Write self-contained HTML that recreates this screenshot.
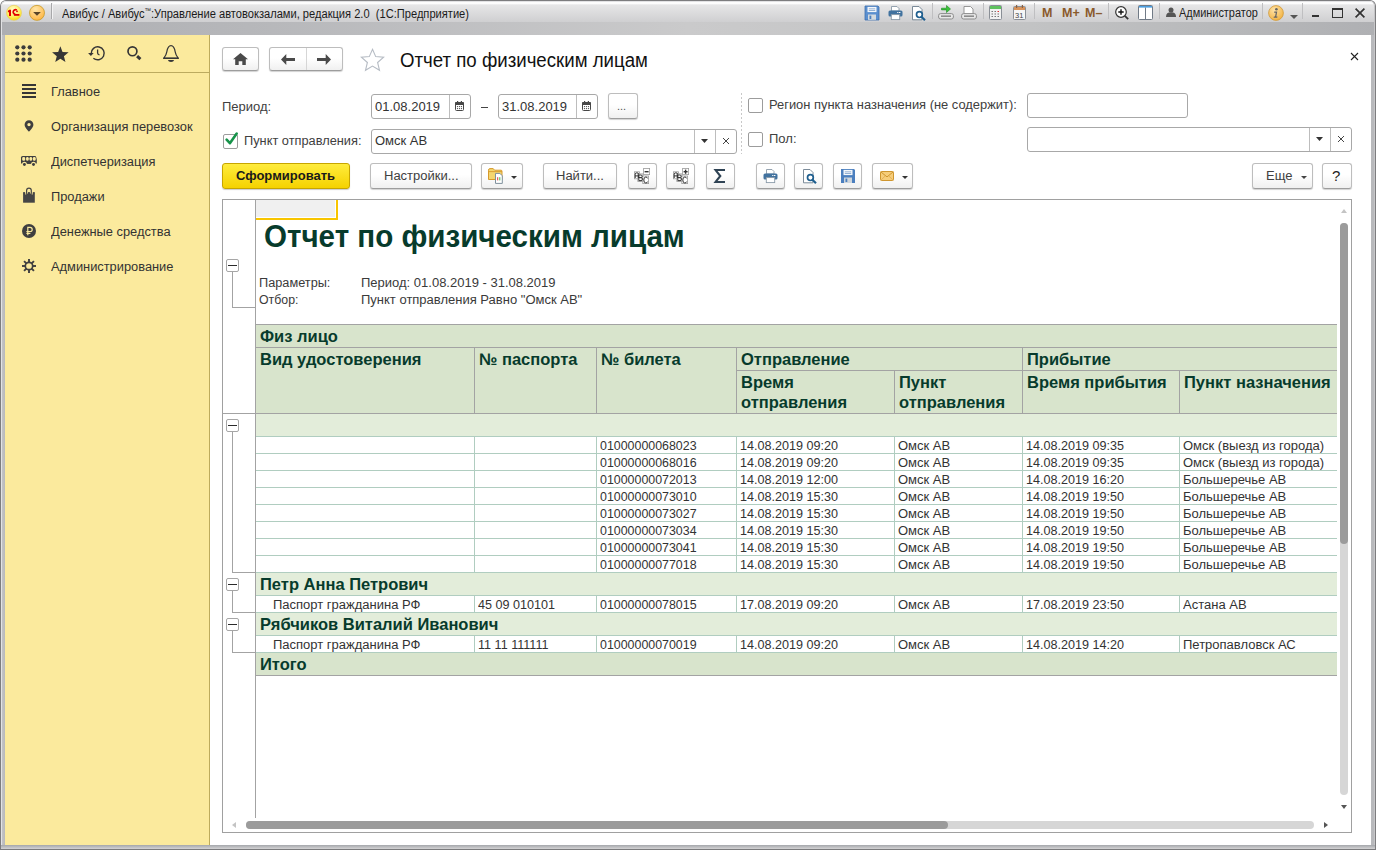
<!DOCTYPE html>
<html><head><meta charset="utf-8">
<style>
*{box-sizing:border-box;margin:0;padding:0}
html,body{width:1376px;height:850px;overflow:hidden;background:#ffffff;font-family:"Liberation Sans",sans-serif;}
.a{position:absolute}
svg{position:absolute;overflow:visible}
#win{position:absolute;left:0;top:0;width:1376px;height:850px;background:linear-gradient(90deg,#cacacc,#b8b9bc 5px);border-radius:6px 6px 0 0;overflow:hidden}
#tb{position:absolute;left:1px;top:1px;width:1374px;height:21px;background:linear-gradient(#fdfdfd 0,#fdfdfd 2.5px,#e6e6e7 4px,#cfcfd1);border-radius:5px 5px 0 0}
#band{position:absolute;left:2px;top:22px;width:1372px;height:13px;background:linear-gradient(90deg,#adaeb2 0,#b6b7ba 18%,#cacacb 50%,#c2c3c4 75%,#afb0b3 100%);}
#side{position:absolute;left:5px;top:35px;width:205px;height:810px;background:#fbea9d;border-right:1px solid #bdab5c;}
#main{position:absolute;left:210px;top:35px;width:1161px;height:810px;background:#fff;}
.t13{font-size:13px;color:#4d4d4d;white-space:nowrap;position:absolute}
.btn{position:absolute;border:1px solid #bdbdbd;border-bottom-color:#9d9d9d;border-radius:3px;background:linear-gradient(#ffffff 45%,#f0f0f0);box-shadow:0 1px 1px rgba(0,0,0,.18);}
.inp{position:absolute;border:1px solid #a8a8a8;border-radius:3px;background:#fff;}
.chk{position:absolute;width:15px;height:15px;border:1px solid #9c9c9c;border-radius:2px;background:#fff}
.menu{position:absolute;left:46px;font-size:13px;color:#333;white-space:nowrap}
.u{position:absolute;font-size:13.7px;line-height:14px;white-space:nowrap;transform-origin:0 0;transform:scaleX(0.95)}
</style></head><body>
<div id="win">
 <div id="tb"></div>
 <div id="band"></div>
  <!-- title bar -->
 <div class="a" style="left:0;top:0;width:1376px;height:850px;border:1px solid #7d7d7f;border-bottom:none;border-radius:6px 6px 0 0"></div>
 <div class="a" style="left:1px;top:1px;width:1374px;height:849px;border:1px solid #e2e2e4;border-bottom:none;border-right-color:#c6c6c8;border-radius:5px 5px 0 0"></div>
 <svg class="a" style="left:6px;top:5px" width="17" height="17" viewBox="0 0 17 17">
  <defs><radialGradient id="g1c" cx="45%" cy="30%" r="75%"><stop offset="0" stop-color="#fffbd0"/><stop offset=".6" stop-color="#ffef60"/><stop offset="1" stop-color="#f7d600"/></radialGradient>
  <radialGradient id="gdd" cx="40%" cy="25%" r="80%"><stop offset="0" stop-color="#ffe6a8"/><stop offset="1" stop-color="#ffb440"/></radialGradient></defs>
  <circle cx="8" cy="7.8" r="7.5" fill="url(#g1c)" stroke="#e8cf60" stroke-width="0.7"/>
  <path d="M3 4.8h2v6.1H3V6.9L1.9 7.4V6z" fill="#e00000"/>
  <path d="M10.8 5.1a2.3 2.3 0 1 0 -1.4 4.2" stroke="#e00000" stroke-width="1.7" fill="none"/>
  <rect x="7.9" y="9" width="5.5" height="1.8" fill="#e00000"/>
  <rect x="10.2" y="5.6" width="1.6" height="1.5" fill="#e00000"/>
 </svg>
 <svg class="a" style="left:29px;top:5px" width="17" height="17" viewBox="0 0 17 17">
  <circle cx="8" cy="7.85" r="7.5" fill="url(#gdd)" stroke="#c79a2a" stroke-width="0.8"/>
  <path d="M4.1 7h7.8l-3.9 3.7z" fill="#5a4528"/>
 </svg>
 <div class="a" style="left:51px;top:3px;width:1px;height:16px;background:#a8a8aa"></div>
 <div class="a" style="left:52px;top:3px;width:1px;height:16px;background:#f2f2f3"></div>
 <div class="a" style="left:62px;top:5px;font-size:12px;line-height:12px;color:#1b1b1b;white-space:nowrap;transform-origin:0 0;transform:scaleX(0.926)">Авибус / Авибус<sup style="font-size:7px;vertical-align:5px">™</sup>:Управление автовокзалами, редакция 2.0&nbsp; (1С:Предприятие)</div>

 <!-- title bar right icons -->
 <svg style="left:865px;top:6px" width="14" height="14" viewBox="0 0 14 14">
  <path d="M0 0h13l1 1v13H0z" fill="#5b8fcf" stroke="#3d6fae" stroke-width=".8"/>
  <rect x="2.5" y="0.9" width="9" height="5.2" fill="#f4f7fb"/>
  <rect x="3.8" y="2.4" width="6.4" height="0.9" fill="#8aa9cf"/><rect x="3.8" y="4" width="6.4" height="0.9" fill="#8aa9cf"/>
  <rect x="3" y="8.5" width="8" height="5.3" fill="#d4dadf"/><rect x="4.5" y="9.6" width="1.8" height="3.4" fill="#4b7fbf"/>
 </svg>
 <svg style="left:888px;top:6px" width="15" height="14" viewBox="0 0 15 14">
  <path d="M3.5 0.5h5.5l2 2V5h-7.5z" fill="#fff" stroke="#8a9aa8" stroke-width=".9"/>
  <rect x="0.5" y="4.6" width="14" height="6" rx="1.5" fill="#41729f"/>
  <rect x="11" y="6" width="1.4" height="1" fill="#fff"/><rect x="9.2" y="6" width="1.2" height="1" fill="#fff"/>
  <rect x="3.3" y="8.6" width="8.4" height="5" fill="#fff" stroke="#8a9aa8" stroke-width=".9"/>
 </svg>
 <svg style="left:912px;top:6px" width="14" height="15" viewBox="0 0 14 15">
  <path d="M0.5 0.5h6.5l3 3v10.3H0.5z" fill="#fff" stroke="#6d7f8e" stroke-width=".9"/>
  <circle cx="7.4" cy="8.6" r="2.9" fill="#fff" stroke="#1f5f8f" stroke-width="1.7"/>
  <path d="M9.4 10.7l3.6 3.6" stroke="#1f5f8f" stroke-width="2.2"/>
 </svg>
 <div class="a" style="left:932px;top:3px;width:1px;height:16px;background:#bfbfc1"></div>
 <svg style="left:938px;top:5px" width="16" height="15" viewBox="0 0 16 15">
  <rect x="0.6" y="8.6" width="14.8" height="5.4" rx="2" fill="#e8e8e8" stroke="#8c8c8c" stroke-width="1"/>
  <rect x="3" y="10.4" width="10" height="1.6" fill="#8c8c8c"/>
  <path d="M3.5 3.2h5V0.5l4 3.5-4 3.5V4.9h-5z" fill="#39c43a" stroke="#1e8a22" stroke-width=".6"/>
 </svg>
 <svg style="left:961px;top:6px" width="16" height="14" viewBox="0 0 16 14">
  <path d="M3 0.5h6.5l2.5 2.5v5.5H3z" fill="#fff" stroke="#8c8c8c" stroke-width=".9"/>
  <rect x="0.6" y="7.6" width="14.8" height="5.4" rx="2" fill="#e8e8e8" stroke="#8c8c8c" stroke-width="1"/>
  <rect x="3" y="9.4" width="10" height="1.6" fill="#8c8c8c"/>
 </svg>
 <div class="a" style="left:983px;top:3px;width:1px;height:16px;background:#bfbfc1"></div>
 <svg style="left:989px;top:5px" width="13" height="15" viewBox="0 0 13 15">
  <rect x="0.5" y="0.5" width="12" height="14" rx="1" fill="#f2f2f2" stroke="#8a8f96" stroke-width="1"/>
  <rect x="1" y="1" width="11" height="3" fill="#5fc25f"/>
  <g fill="#777"><rect x="2.5" y="6" width="1.5" height="1"/><rect x="5.5" y="6" width="1.5" height="1"/><rect x="2.5" y="8.5" width="1.5" height="1"/><rect x="5.5" y="8.5" width="1.5" height="1"/><rect x="8.5" y="8.5" width="1.5" height="1"/><rect x="2.5" y="11" width="1.5" height="1"/><rect x="5.5" y="11" width="1.5" height="1"/><rect x="8.5" y="11" width="1.5" height="1"/></g>
  <rect x="8.5" y="6" width="1.5" height="1" fill="#e03030"/>
 </svg>
 <svg style="left:1013px;top:5px" width="13" height="15" viewBox="0 0 13 15">
  <rect x="0.5" y="1.5" width="12" height="13" rx="1" fill="#f6f6f6" stroke="#8a8f96" stroke-width="1"/>
  <rect x="1" y="2" width="11" height="3" fill="#d9935a"/>
  <rect x="3" y="0" width="1.2" height="3" fill="#8a6040"/><rect x="8.8" y="0" width="1.2" height="3" fill="#8a6040"/>
  <text x="2" y="12.8" font-family="Liberation Sans" font-size="7.5" fill="#444">31</text>
 </svg>
 <div class="a" style="left:1034px;top:3px;width:1px;height:16px;background:#bfbfc1"></div>
 <div class="a" style="left:1042px;top:7px;font-size:12.5px;line-height:12px;font-weight:bold;color:#8a5a2c;white-space:nowrap">M</div>
 <div class="a" style="left:1062px;top:7px;font-size:12.5px;line-height:12px;font-weight:bold;color:#8a5a2c;white-space:nowrap">M+</div>
 <div class="a" style="left:1085px;top:7px;font-size:12.5px;line-height:12px;font-weight:bold;color:#8a5a2c;white-space:nowrap">M–</div>
 <div class="a" style="left:1108px;top:3px;width:1px;height:16px;background:#bfbfc1"></div>
 <svg style="left:1115px;top:6px" width="14" height="14" viewBox="0 0 14 14">
  <circle cx="6" cy="6" r="5.3" fill="#fff" stroke="#333" stroke-width="1.2"/>
  <path d="M3.3 6h5.4M6 3.3v5.4" stroke="#111" stroke-width="1.4"/>
  <path d="M9.8 9.8l3.4 3.4" stroke="#333" stroke-width="1.8"/>
 </svg>
 <svg style="left:1138px;top:5px" width="15" height="15" viewBox="0 0 15 15">
  <rect x="0.5" y="0.5" width="14" height="14" rx="1" fill="#fff" stroke="#707a86" stroke-width="1"/>
  <rect x="1" y="1" width="13" height="1.6" fill="#4a9ee0"/>
  <rect x="7" y="2.5" width="1" height="12" fill="#707a86"/>
 </svg>
 <div class="a" style="left:1159px;top:3px;width:1px;height:16px;background:#bfbfc1"></div>
 <svg style="left:1166px;top:7px" width="10" height="10" viewBox="0 0 10 10" fill="#555">
  <circle cx="5" cy="2.9" r="2.5"/><path d="M0 10c0-3.4 1.8-4.8 5-4.8S10 6.6 10 10z"/>
 </svg>
 <div class="a" style="left:1179px;top:6.5px;font-size:12px;line-height:12px;color:#222;white-space:nowrap;transform-origin:0 0;transform:scaleX(0.91)">Администратор</div>
 <div class="a" style="left:1262px;top:3px;width:1px;height:16px;background:#bfbfc1"></div>
 <svg style="left:1268px;top:5px" width="16" height="16" viewBox="0 0 16 16">
  <defs><radialGradient id="ginf" cx="40%" cy="30%" r="70%"><stop offset="0" stop-color="#ffe3a8"/><stop offset="1" stop-color="#f2b445"/></radialGradient></defs>
  <circle cx="8" cy="8" r="7.4" fill="url(#ginf)" stroke="#d09a3c" stroke-width=".8"/>
  <circle cx="8.4" cy="4.2" r="1.3" fill="#666"/>
  <path d="M6.3 6.6h3l-1 5h1.2l-.3 1.2H5.6l.3-1.2h1.1l.8-3.8h-1.7z" fill="#666"/>
 </svg>
 <svg style="left:1290px;top:15px" width="8" height="4" viewBox="0 0 8 4" fill="#555"><path d="M0 0h8L4 4z"/></svg>
 <div class="a" style="left:1302px;top:3px;width:1px;height:16px;background:#bfbfc1"></div>
 <div class="a" style="left:1312px;top:15px;width:7px;height:2px;background:#333"></div>
 <div class="a" style="left:1332px;top:8px;width:11px;height:10px;border:1px solid #333;border-top-width:2px"></div>
 <svg style="left:1355px;top:8px" width="10" height="10" viewBox="0 0 10 10" stroke="#333" stroke-width="1.7"><path d="M0.6 0.6l8.8 8.8M9.4 0.6L0.6 9.4"/></svg>


 <div id="side">
  <!-- sidebar: coords relative to side (left 5, top 35) -->
  <div class="a" style="left:0;top:37px;width:204px;height:1px;background:#bcab5f"></div>
  <svg style="left:10px;top:10px" width="18" height="18" viewBox="0 0 18 18" fill="#3c3c3c">
   <circle cx="2.3" cy="2.3" r="2.1"/><circle cx="8.5" cy="2.3" r="2.1"/><circle cx="14.7" cy="2.3" r="2.1"/>
   <circle cx="2.3" cy="8.5" r="2.1"/><circle cx="8.5" cy="8.5" r="2.1"/><circle cx="14.7" cy="8.5" r="2.1"/>
   <circle cx="2.3" cy="14.7" r="2.1"/><circle cx="8.5" cy="14.7" r="2.1"/><circle cx="14.7" cy="14.7" r="2.1"/>
  </svg>
  <svg style="left:0;top:0" width="205" height="40" viewBox="5 35 205 40">
   <path d="M60.35 46.30 L62.55 51.97 L68.62 52.31 L63.92 56.16 L65.46 62.04 L60.35 58.75 L55.24 62.04 L56.78 56.16 L52.08 52.31 L58.15 51.97z" fill="#363636"/>
   <path d="M91.2 53.6A6.5 6.5 0 1 1 93.4 58.2" fill="none" stroke="#363636" stroke-width="1.45"/>
   <path d="M88.1 53.1h5.6l-2.8 2.9z" fill="#363636"/>
   <path d="M97.6 49.5v3.5q0 1.2 1.9 2" fill="none" stroke="#363636" stroke-width="1.3"/>
   <circle cx="132.45" cy="51.3" r="4.45" fill="none" stroke="#363636" stroke-width="1.7"/>
   <path d="M137.1 56.2l3.3 3" stroke="#363636" stroke-width="3"/>
   <path d="M171 45.6c-2.6 0-3.6 2.6-4.2 6.2-.5 3-1.6 4.6-3 6.4h14.4c-1.4-1.8-2.5-3.4-3-6.4-.6-3.6-1.6-6.2-4.2-6.2z" fill="none" stroke="#363636" stroke-width="1.2" stroke-linejoin="round"/>
   <path d="M163.2 58.4h15.6" stroke="#363636" stroke-width="1.2"/>
   <path d="M167.9 60h6.2q-.5 2-3.1 2t-3.1-2z" fill="#363636"/>
  </svg>
  <!-- menu icons -->
  <svg style="left:17px;top:49px" width="14" height="14" viewBox="0 0 14 14" fill="#363636">
   <rect x="0" y="0" width="14" height="2"/><rect x="0" y="4" width="14" height="2"/><rect x="0" y="8" width="14" height="2"/><rect x="0" y="12" width="14" height="2"/>
  </svg>
  <svg style="left:19px;top:85px" width="10" height="12" viewBox="0 0 10 12" fill="#3f3f3f">
   <path d="M5 0.3A4.4 4.4 0 0 0 .6 4.7C.6 7.6 5 11.7 5 11.7s4.4-4.1 4.4-7A4.4 4.4 0 0 0 5 .3zm0 2.6a1.7 1.7 0 1 1 0 3.4 1.7 1.7 0 0 1 0-3.4z"/>
  </svg>
  <svg style="left:16px;top:121px" width="16" height="11" viewBox="0 0 16 11">
   <path d="M1.6 0h12.2q1.2 0 1.5 1.4l.5 2.4v3.8H0V1.6Q0 0 1.6 0z" fill="#3f3f3f"/>
   <g fill="#fbea9d"><rect x="1.2" y="1.1" width="3" height="3.6" rx="1.3"/><rect x="5.1" y="1.1" width="2.6" height="3.6" rx="1.2"/><rect x="8.5" y="1.1" width="2.6" height="3.6" rx="1.2"/><rect x="11.9" y="1.1" width="2.8" height="3.6" rx="1.2"/></g>
   <circle cx="3.4" cy="8.2" r="2.4" fill="#fbea9d"/><circle cx="12.5" cy="8.2" r="2.4" fill="#fbea9d"/>
   <circle cx="3.4" cy="8.5" r="1.45" fill="#3f3f3f"/><circle cx="12.5" cy="8.5" r="1.45" fill="#3f3f3f"/>
   <rect x="6.1" y="7" width="3.8" height="0.9" fill="#3f3f3f"/>
  </svg>
  <svg style="left:18px;top:153px" width="13" height="15" viewBox="0 0 13 15" fill="#454545">
   <rect x="0.1" y="5.6" width="11.7" height="9.1"/><rect x="0.1" y="4.1" width="2" height="2"/><rect x="4.95" y="4.1" width="2" height="2"/><rect x="9.8" y="4.1" width="2" height="2"/>
   <path d="M3.6 6.6V2.5a2.35 2.35 0 0 1 4.7 0v4.1" fill="none" stroke="#454545" stroke-width="1.2"/>
   <path d="M2.2 5.6h1v0.8h-1zM8.7 5.6h1v0.8h-1z" fill="#fbea9d"/>
  </svg>
  <svg style="left:17px;top:189px" width="14" height="14" viewBox="0 0 14 14">
   <circle cx="7" cy="7" r="7" fill="#3f3f3f"/>
   <path d="M5.8 11.3V3.3h2.3a2.1 2.1 0 0 1 0 4.2H4.4M4.4 9.3h4" fill="none" stroke="#fbea9d" stroke-width="1.2"/>
  </svg>
  <svg style="left:17px;top:224px" width="14" height="14" viewBox="0 0 14 14">
   <g fill="#3f3f3f"><rect x="6.05" y="0" width="1.9" height="3.6" transform="rotate(0 7 7)"/><rect x="6.05" y="0" width="1.9" height="3.6" transform="rotate(45 7 7)"/><rect x="6.05" y="0" width="1.9" height="3.6" transform="rotate(90 7 7)"/><rect x="6.05" y="0" width="1.9" height="3.6" transform="rotate(135 7 7)"/><rect x="6.05" y="0" width="1.9" height="3.6" transform="rotate(180 7 7)"/><rect x="6.05" y="0" width="1.9" height="3.6" transform="rotate(225 7 7)"/><rect x="6.05" y="0" width="1.9" height="3.6" transform="rotate(270 7 7)"/><rect x="6.05" y="0" width="1.9" height="3.6" transform="rotate(315 7 7)"/></g>
   <circle cx="7" cy="7" r="3.7" fill="none" stroke="#3f3f3f" stroke-width="1.7"/>
  </svg>
  <div class="u" style="left:46px;top:50.35px;color:#333;transform:scaleX(0.938)">Главное</div>
  <div class="u" style="left:46px;top:85.35px;color:#333;transform:scaleX(0.938)">Организация перевозок</div>
  <div class="u" style="left:46px;top:120.35px;color:#333;transform:scaleX(0.938)">Диспетчеризация</div>
  <div class="u" style="left:46px;top:155.35px;color:#333;transform:scaleX(0.938)">Продажи</div>
  <div class="u" style="left:46px;top:190.35px;color:#333;transform:scaleX(0.938)">Денежные средства</div>
  <div class="u" style="left:46px;top:225.35px;color:#333;transform:scaleX(0.938)">Администрирование</div>


 </div>
 <div id="main"></div>
 <!-- ===== form header ===== -->
 <div class="btn" style="left:222px;top:47px;width:37px;height:24px"></div>
 <svg style="left:233px;top:53px" width="15" height="12" viewBox="0 0 15 12" fill="#4a4a4a"><path d="M7.5 0L15 6.3h-2.2V12H9.3V8.3H5.7V12H2.2V6.3H0z"/></svg>
 <div class="btn" style="left:269px;top:47px;width:74px;height:24px"></div>
 <div class="a" style="left:306px;top:48px;width:1px;height:22px;background:#d6d6d6"></div>
 <svg style="left:281px;top:54px" width="14" height="11" viewBox="0 0 14 11" fill="#4a4a4a"><path d="M0 5.5L5.3 0v3.9H14v3.2H5.3V11z"/></svg>
 <svg style="left:317px;top:54px" width="14" height="11" viewBox="0 0 14 11" fill="#4a4a4a"><path d="M14 5.5L8.7 0v3.9H0v3.2h8.7V11z"/></svg>
 <svg style="left:360px;top:48px" width="25" height="24" viewBox="0 0 25 24" fill="none" stroke="#b6bcc4" stroke-width="1.1"><path d="M12.5 1.3l3.2 7.3 7.9.6-6 5.3 1.9 7.8-7-4.2-7 4.2 1.9-7.8-6-5.3 7.9-.6z"/></svg>
 <div class="a" style="left:400px;top:50.5px;font-size:19.4px;line-height:19px;color:#111;white-space:nowrap;transform-origin:0 0;transform:scaleX(0.962)">Отчет по физическим лицам</div>
 <svg style="left:1351px;top:53px" width="7" height="7" viewBox="0 0 7 7" stroke="#222" stroke-width="1.1"><path d="M0 0L7 7M7 0L0 7"/></svg>

 <!-- row 1 -->
 <div class="u" style="left:222px;top:99.55px;color:#404040;">Период:</div>
 <div class="inp" style="left:371px;top:94px;width:100px;height:25px"></div>
 <div class="a" style="left:449px;top:95px;width:1px;height:23px;background:#bdbdbd"></div>
 <div class="u" style="left:375px;top:99.8px;color:#333;">01.08.2019</div>
 <svg style="left:455px;top:101px" width="9" height="10" viewBox="0 0 9 10"><rect x="0.5" y="1.5" width="8" height="8" rx="1" fill="#fff" stroke="#474747" stroke-width="1"/><rect x="0" y="1" width="9" height="3" rx="1" fill="#474747"/><rect x="2" y="0" width="1.2" height="2.2" fill="#474747"/><rect x="5.8" y="0" width="1.2" height="2.2" fill="#474747"/><g fill="#474747"><circle cx="2.5" cy="5.6" r=".65"/><circle cx="4.5" cy="5.6" r=".65"/><circle cx="6.5" cy="5.6" r=".65"/><circle cx="2.5" cy="7.6" r=".65"/><circle cx="4.5" cy="7.6" r=".65"/><circle cx="6.5" cy="7.6" r=".65"/></g></svg>
 <div class="a" style="left:481px;top:107px;width:7px;height:1px;background:#444"></div>
 <div class="inp" style="left:498px;top:94px;width:100px;height:25px"></div>
 <div class="a" style="left:576px;top:95px;width:1px;height:23px;background:#bdbdbd"></div>
 <div class="u" style="left:502px;top:99.8px;color:#333;">31.08.2019</div>
 <svg style="left:582px;top:101px" width="9" height="10" viewBox="0 0 9 10"><rect x="0.5" y="1.5" width="8" height="8" rx="1" fill="#fff" stroke="#474747" stroke-width="1"/><rect x="0" y="1" width="9" height="3" rx="1" fill="#474747"/><rect x="2" y="0" width="1.2" height="2.2" fill="#474747"/><rect x="5.8" y="0" width="1.2" height="2.2" fill="#474747"/><g fill="#474747"><circle cx="2.5" cy="5.6" r=".65"/><circle cx="4.5" cy="5.6" r=".65"/><circle cx="6.5" cy="5.6" r=".65"/><circle cx="2.5" cy="7.6" r=".65"/><circle cx="4.5" cy="7.6" r=".65"/><circle cx="6.5" cy="7.6" r=".65"/></g></svg>
 <div class="btn" style="left:608px;top:93px;width:30px;height:26px"></div>
 <div class="a" style="left:617px;top:101px;font-size:11px;line-height:11px;color:#555">...</div>

 <div class="a" style="left:741px;top:93px;width:1px;height:61px;background:repeating-linear-gradient(#c8c8c8 0 2px,transparent 2px 4px)"></div>
 <div class="chk" style="left:748px;top:98px"></div>
 <div class="u" style="left:769px;top:98.15px;color:#404040;transform:scaleX(0.942)">Регион пункта назначения (не содержит):</div>
 <div class="inp" style="left:1027px;top:93px;width:161px;height:25px"></div>

 <!-- row 2 -->
 <div class="chk" style="left:223px;top:134px"></div>
 <svg style="left:224px;top:131px" width="16" height="16" viewBox="0 0 16 16" fill="none" stroke="#17934a" stroke-width="2.6" stroke-linecap="round" stroke-linejoin="round"><path d="M2.6 8.6l3.3 3.6 6.8-9.6"/></svg>
 <div class="u" style="left:244px;top:134.35px;color:#404040;transform:scaleX(0.935)">Пункт отправления:</div>
 <div class="inp" style="left:371px;top:129px;width:366px;height:25px"></div>
 <div class="a" style="left:694px;top:130px;width:1px;height:23px;background:#bdbdbd"></div>
 <div class="a" style="left:715px;top:130px;width:1px;height:23px;background:#bdbdbd"></div>
 <div class="u" style="left:375px;top:134.05px;color:#333;">Омск АВ</div>
 <svg style="left:701px;top:139px" width="7" height="4" viewBox="0 0 7 4" fill="#333"><path d="M0 0h7L3.5 4z"/></svg>
 <svg style="left:723px;top:138px" width="6" height="6" viewBox="0 0 6 6" stroke="#444" stroke-width="1"><path d="M0 0L6 6M6 0L0 6"/></svg>
 <div class="chk" style="left:748px;top:132px"></div>
 <div class="u" style="left:769px;top:132.25px;color:#404040;">Пол:</div>
 <div class="inp" style="left:1027px;top:127px;width:325px;height:25px"></div>
 <div class="a" style="left:1309px;top:128px;width:1px;height:23px;background:#bdbdbd"></div>
 <div class="a" style="left:1330px;top:128px;width:1px;height:23px;background:#bdbdbd"></div>
 <svg style="left:1316px;top:137px" width="7" height="4" viewBox="0 0 7 4" fill="#333"><path d="M0 0h7L3.5 4z"/></svg>
 <svg style="left:1338px;top:136px" width="6" height="6" viewBox="0 0 6 6" stroke="#444" stroke-width="1"><path d="M0 0L6 6M6 0L0 6"/></svg>

 <!-- row 3 buttons -->
 <div class="a" style="left:222px;top:163px;width:128px;height:26px;border:1px solid #c7a500;border-radius:3px;background:linear-gradient(#ffec3d,#f5d200);box-shadow:0 1px 1px rgba(0,0,0,.2)"></div>
 <div class="u" style="left:236px;top:169.2px;font-weight:bold;color:#1a1a1a">Сформировать</div>
 <div class="btn" style="left:370px;top:163px;width:102px;height:26px"></div>
 <div class="u" style="left:384px;top:168.95px;color:#404040;">Настройки...</div>
 <div class="btn" style="left:481px;top:163px;width:42px;height:26px"></div>
 <div class="btn" style="left:543px;top:163px;width:74px;height:26px"></div>
 <div class="u" style="left:556px;top:168.95px;color:#404040;">Найти...</div>
 <div class="btn" style="left:628px;top:163px;width:29px;height:26px"></div>
 <div class="btn" style="left:666px;top:163px;width:29px;height:26px"></div>
 <div class="btn" style="left:706px;top:163px;width:29px;height:26px"></div>
 <div class="btn" style="left:756px;top:163px;width:29px;height:26px"></div>
 <div class="btn" style="left:794px;top:163px;width:29px;height:26px"></div>
 <div class="btn" style="left:833px;top:163px;width:29px;height:26px"></div>
 <div class="btn" style="left:872px;top:163px;width:41px;height:26px"></div>
 <div class="btn" style="left:1252px;top:163px;width:61px;height:26px"></div>
 <div class="u" style="left:1266px;top:169.15px;color:#404040;">Еще</div>
 <svg style="left:1301px;top:176px" width="6" height="3" viewBox="0 0 6 3" fill="#444"><path d="M0 0h6L3 3z"/></svg>
 <div class="btn" style="left:1322px;top:163px;width:30px;height:26px"></div>
 <div class="a" style="left:1332px;top:168px;font-size:15px;line-height:15px;color:#222">?</div>

  <!-- toolbar icons -->
 <svg style="left:488px;top:168px" width="17" height="16" viewBox="0 0 17 16">
  <path d="M0.5 2.2Q0.5 0.6 2 0.6h3.2l1.4 1.6h6.4q1 0 1 1V11.5H0.5z" fill="#f3d670" stroke="#d79a2c" stroke-width="1"/>
  <path d="M0.5 3.6h13.5" stroke="#d79a2c" stroke-width="0.9"/>
  <path d="M7.5 5.4h4.4l2.4 2.4v7.6H7.5z" fill="#fff" stroke="#7f909c" stroke-width="1"/>
  <rect x="9.2" y="9.2" width="1" height="3.2" fill="#e23b3b"/><rect x="11.3" y="9.2" width="1" height="3.2" fill="#3cbf4a"/>
 </svg>
 <svg style="left:511px;top:176px" width="6" height="3" viewBox="0 0 6 3" fill="#333"><path d="M0 0h6L3 3z"/></svg>
 <svg style="left:634px;top:168px" width="16" height="16" viewBox="0 0 16 16"><rect x="0.4" y="3.8" width="5" height="7" fill="#fff" stroke="#9a9a9a" stroke-width=".8"/><rect x="3.8" y="5.9" width="5.2" height="7.6" fill="#fff" stroke="#9a9a9a" stroke-width=".8"/><rect x="8.8" y="8" width="5.8" height="7.6" fill="#fff" stroke="#9a9a9a" stroke-width=".8"/><rect x="9.6" y="0.4" width="6" height="6.2" fill="#fff" stroke="#9a9a9a" stroke-width=".8"/><path d="M1.2 10V6.2q0-1.4 1.7-1.4t1.7 1.4V10M1.2 7.9h3.4" fill="none" stroke="#333" stroke-width="1"/><path d="M4.8 12.6V7h2q1.4 0 1.4 1.3t-1.4 1.3h-2 2.2q1.4 0 1.4 1.5t-1.4 1.5z" fill="none" stroke="#333" stroke-width="1"/><path d="M13.6 10.4q-.3-1.4-1.8-1.4-2 0-2 3t2 3q1.5 0 1.8-1.4" fill="none" stroke="#333" stroke-width="1"/><rect x="10.6" y="3" width="4" height="1.4" fill="#333"/></svg>
 <svg style="left:673px;top:168px" width="16" height="16" viewBox="0 0 16 16"><rect x="0.4" y="3.8" width="5" height="7" fill="#fff" stroke="#9a9a9a" stroke-width=".8"/><rect x="3.8" y="5.9" width="5.2" height="7.6" fill="#fff" stroke="#9a9a9a" stroke-width=".8"/><rect x="8.8" y="8" width="5.8" height="7.6" fill="#fff" stroke="#9a9a9a" stroke-width=".8"/><rect x="9.6" y="0.4" width="6" height="6.2" fill="#fff" stroke="#9a9a9a" stroke-width=".8"/><path d="M1.2 10V6.2q0-1.4 1.7-1.4t1.7 1.4V10M1.2 7.9h3.4" fill="none" stroke="#333" stroke-width="1"/><path d="M4.8 12.6V7h2q1.4 0 1.4 1.3t-1.4 1.3h-2 2.2q1.4 0 1.4 1.5t-1.4 1.5z" fill="none" stroke="#333" stroke-width="1"/><path d="M13.6 10.4q-.3-1.4-1.8-1.4-2 0-2 3t2 3q1.5 0 1.8-1.4" fill="none" stroke="#333" stroke-width="1"/><rect x="10.6" y="3" width="4" height="1.4" fill="#333"/><rect x="11.9" y="1.6" width="1.4" height="4.2" fill="#333"/></svg>
 <svg style="left:714px;top:169px" width="11" height="14" viewBox="0 0 11 14" fill="none" stroke="#2f4354" stroke-width="2.1"><path d="M11 1.05H1.6L6.3 7 1.6 12.95H11"/></svg>
 <svg style="left:763px;top:169px" width="15" height="14" viewBox="0 0 15 14">
  <path d="M3.5 0.5h5.5l2 2V5h-7.5z" fill="#fff" stroke="#8a9aa8" stroke-width=".9"/>
  <rect x="0.5" y="4.6" width="14" height="6" rx="1.5" fill="#41729f"/>
  <rect x="11" y="6" width="1.4" height="1" fill="#fff"/><rect x="9.2" y="6" width="1.2" height="1" fill="#fff"/>
  <rect x="3.3" y="8.6" width="8.4" height="5" fill="#fff" stroke="#8a9aa8" stroke-width=".9"/>
 </svg>
 <svg style="left:803px;top:169px" width="14" height="15" viewBox="0 0 14 15">
  <path d="M0.5 0.5h6.5l3 3v10.3H0.5z" fill="#fff" stroke="#6d7f8e" stroke-width=".9"/>
  <circle cx="7.4" cy="8.6" r="2.9" fill="#fff" stroke="#1f5f8f" stroke-width="1.7"/>
  <path d="M9.4 10.7l3.6 3.6" stroke="#1f5f8f" stroke-width="2.2"/>
 </svg>
 <svg style="left:841px;top:169px" width="14" height="14" viewBox="0 0 14 14">
  <path d="M0 0h13l1 1v13H0z" fill="#4b7fbf"/>
  <rect x="2.5" y="0.9" width="9" height="5.2" fill="#f4f7fb"/>
  <rect x="3.8" y="2.4" width="6.4" height="0.9" fill="#8aa9cf"/><rect x="3.8" y="4" width="6.4" height="0.9" fill="#8aa9cf"/>
  <rect x="3" y="8.5" width="8" height="5.5" fill="#cfd6dc"/><rect x="4.5" y="9.6" width="1.8" height="3.4" fill="#4b7fbf"/>
 </svg>
 <svg style="left:880px;top:171px" width="14" height="10" viewBox="0 0 14 10">
  <rect x="0.5" y="0.5" width="13" height="9" rx="1" fill="#f6cd7a" stroke="#cf962f" stroke-width="1"/>
  <path d="M0.8 0.9l6.2 5 6.2-5" fill="none" stroke="#cf962f" stroke-width="1"/>
  <path d="M0.8 9.2l4.4-4.2M13.2 9.2l-4.4-4.2" fill="none" stroke="#e0aa50" stroke-width=".8"/>
 </svg>
 <svg style="left:902px;top:176px" width="6" height="3" viewBox="0 0 6 3" fill="#333"><path d="M0 0h6L3 3z"/></svg>


 <div class="a" style="left:222px;top:199px;width:1130px;height:634px;border:1px solid #a0a0a0;background:#fff"></div>
 <div class="a" style="left:255px;top:200px;width:1px;height:618px;background:#a3a3a3"></div>
 <div class="a" style="left:256px;top:200px;width:79px;height:17px;background:#f0f0f0"></div>
 <div class="a" style="left:336px;top:200px;width:2px;height:20px;background:#f8c500"></div>
 <div class="a" style="left:256px;top:218px;width:82px;height:2px;background:#f8c500"></div>
 <div class="a" style="left:264px;top:220.84px;font-size:31.5px;line-height:31.5px;font-weight:bold;color:#073b2c;white-space:nowrap;transform-origin:0 0;transform:scaleX(0.938);">Отчет по физическим лицам</div>
 <div class="a" style="left:226px;top:259px;width:13px;height:13px;border:1px solid #a6a6a6;border-radius:2px;background:#fff"></div>
 <div class="a" style="left:228px;top:265px;width:9px;height:1px;background:#2a2a2a"></div>
 <div class="a" style="left:232px;top:272px;width:1px;height:35px;background:#a3a3a3"></div>
 <div class="a" style="left:232px;top:307px;width:23px;height:1px;background:#a3a3a3"></div>
 <div class="a" style="left:259px;top:276.00px;font-size:13.7px;line-height:13.7px;color:#3a3a3a;white-space:nowrap;transform-origin:0 0;transform:scaleX(0.93);">Параметры:</div>
 <div class="a" style="left:259px;top:293.40px;font-size:13.7px;line-height:13.7px;color:#3a3a3a;white-space:nowrap;transform-origin:0 0;transform:scaleX(0.9);">Отбор:</div>
 <div class="a" style="left:361px;top:276.00px;font-size:13.7px;line-height:13.7px;color:#3a3a3a;white-space:nowrap;transform-origin:0 0;transform:scaleX(0.95);">Период: 01.08.2019 - 31.08.2019</div>
 <div class="a" style="left:361px;top:293.40px;font-size:13.7px;line-height:13.7px;color:#3a3a3a;white-space:nowrap;transform-origin:0 0;transform:scaleX(0.95);">Пункт отправления Равно "Омск АВ"</div>
 <div class="a" style="left:256px;top:324px;width:1081px;height:1px;background:#a3a3a3"></div>
 <div class="a" style="left:256px;top:325px;width:1081px;height:88px;background:#d8e4cc"></div>
 <div class="a" style="left:256px;top:347px;width:1081px;height:1px;background:#a3a3a3"></div>
 <div class="a" style="left:222px;top:413px;width:1115px;height:1px;background:#a3a3a3"></div>
 <div class="a" style="left:474px;top:348px;width:1px;height:65px;background:#a3a3a3"></div>
 <div class="a" style="left:596px;top:348px;width:1px;height:65px;background:#a3a3a3"></div>
 <div class="a" style="left:736px;top:348px;width:1px;height:65px;background:#a3a3a3"></div>
 <div class="a" style="left:1022px;top:348px;width:1px;height:65px;background:#a3a3a3"></div>
 <div class="a" style="left:894px;top:371px;width:1px;height:42px;background:#a3a3a3"></div>
 <div class="a" style="left:1179px;top:371px;width:1px;height:42px;background:#a3a3a3"></div>
 <div class="a" style="left:736px;top:370px;width:601px;height:1px;background:#a3a3a3"></div>
 <div class="a" style="left:260px;top:327.73px;font-size:16.5px;line-height:16.5px;font-weight:bold;color:#073b2c;white-space:nowrap;">Физ лицо</div>
 <div class="a" style="left:260px;top:350.83px;font-size:16.5px;line-height:16.5px;font-weight:bold;color:#073b2c;white-space:nowrap;">Вид удостоверения</div>
 <div class="a" style="left:479px;top:350.83px;font-size:16.5px;line-height:16.5px;font-weight:bold;color:#073b2c;white-space:nowrap;">№ паспорта</div>
 <div class="a" style="left:601px;top:350.83px;font-size:16.5px;line-height:16.5px;font-weight:bold;color:#073b2c;white-space:nowrap;">№ билета</div>
 <div class="a" style="left:741px;top:350.83px;font-size:16.5px;line-height:16.5px;font-weight:bold;color:#073b2c;white-space:nowrap;">Отправление</div>
 <div class="a" style="left:1027px;top:350.83px;font-size:16.5px;line-height:16.5px;font-weight:bold;color:#073b2c;white-space:nowrap;">Прибытие</div>
 <div class="a" style="left:741px;top:373.73px;font-size:16.5px;line-height:16.5px;font-weight:bold;color:#073b2c;white-space:nowrap;">Время</div>
 <div class="a" style="left:741px;top:393.63px;font-size:16.5px;line-height:16.5px;font-weight:bold;color:#073b2c;white-space:nowrap;">отправления</div>
 <div class="a" style="left:899px;top:373.73px;font-size:16.5px;line-height:16.5px;font-weight:bold;color:#073b2c;white-space:nowrap;">Пункт</div>
 <div class="a" style="left:899px;top:393.63px;font-size:16.5px;line-height:16.5px;font-weight:bold;color:#073b2c;white-space:nowrap;">отправления</div>
 <div class="a" style="left:1027px;top:373.73px;font-size:16.5px;line-height:16.5px;font-weight:bold;color:#073b2c;white-space:nowrap;">Время прибытия</div>
 <div class="a" style="left:1184px;top:373.73px;font-size:16.5px;line-height:16.5px;font-weight:bold;color:#073b2c;white-space:nowrap;">Пункт назначения</div>
 <div class="a" style="left:256px;top:414px;width:1081px;height:22px;background:#e3edda"></div>
 <div class="a" style="left:226px;top:419px;width:13px;height:13px;border:1px solid #a6a6a6;border-radius:2px;background:#fff"></div>
 <div class="a" style="left:228px;top:425px;width:9px;height:1px;background:#2a2a2a"></div>
 <div class="a" style="left:232px;top:432px;width:1px;height:140px;background:#a3a3a3"></div>
 <div class="a" style="left:232px;top:572px;width:23px;height:1px;background:#a3a3a3"></div>
 <div class="a" style="left:256px;top:436px;width:1081px;height:1px;background:#b0cdc0"></div>
 <div class="a" style="left:474px;top:437px;width:1px;height:16px;background:#b0cdc0"></div>
 <div class="a" style="left:596px;top:437px;width:1px;height:16px;background:#b0cdc0"></div>
 <div class="a" style="left:736px;top:437px;width:1px;height:16px;background:#b0cdc0"></div>
 <div class="a" style="left:894px;top:437px;width:1px;height:16px;background:#b0cdc0"></div>
 <div class="a" style="left:1022px;top:437px;width:1px;height:16px;background:#b0cdc0"></div>
 <div class="a" style="left:1179px;top:437px;width:1px;height:16px;background:#b0cdc0"></div>
 <div class="a" style="left:599.5px;top:438.80px;font-size:13.7px;line-height:13.7px;color:#333;white-space:nowrap;transform-origin:0 0;transform:scaleX(0.906);">01000000068023</div>
 <div class="a" style="left:739.5px;top:438.80px;font-size:13.7px;line-height:13.7px;color:#333;white-space:nowrap;transform-origin:0 0;transform:scaleX(0.92);">14.08.2019 09:20</div>
 <div class="a" style="left:897.5px;top:438.80px;font-size:13.7px;line-height:13.7px;color:#333;white-space:nowrap;transform-origin:0 0;transform:scaleX(0.95);">Омск АВ</div>
 <div class="a" style="left:1025.5px;top:438.80px;font-size:13.7px;line-height:13.7px;color:#333;white-space:nowrap;transform-origin:0 0;transform:scaleX(0.92);">14.08.2019 09:35</div>
 <div class="a" style="left:1182.5px;top:438.80px;font-size:13.7px;line-height:13.7px;color:#333;white-space:nowrap;transform-origin:0 0;transform:scaleX(0.95);">Омск (выезд из города)</div>
 <div class="a" style="left:256px;top:453px;width:1081px;height:1px;background:#b0cdc0"></div>
 <div class="a" style="left:474px;top:454px;width:1px;height:16px;background:#b0cdc0"></div>
 <div class="a" style="left:596px;top:454px;width:1px;height:16px;background:#b0cdc0"></div>
 <div class="a" style="left:736px;top:454px;width:1px;height:16px;background:#b0cdc0"></div>
 <div class="a" style="left:894px;top:454px;width:1px;height:16px;background:#b0cdc0"></div>
 <div class="a" style="left:1022px;top:454px;width:1px;height:16px;background:#b0cdc0"></div>
 <div class="a" style="left:1179px;top:454px;width:1px;height:16px;background:#b0cdc0"></div>
 <div class="a" style="left:599.5px;top:455.80px;font-size:13.7px;line-height:13.7px;color:#333;white-space:nowrap;transform-origin:0 0;transform:scaleX(0.906);">01000000068016</div>
 <div class="a" style="left:739.5px;top:455.80px;font-size:13.7px;line-height:13.7px;color:#333;white-space:nowrap;transform-origin:0 0;transform:scaleX(0.92);">14.08.2019 09:20</div>
 <div class="a" style="left:897.5px;top:455.80px;font-size:13.7px;line-height:13.7px;color:#333;white-space:nowrap;transform-origin:0 0;transform:scaleX(0.95);">Омск АВ</div>
 <div class="a" style="left:1025.5px;top:455.80px;font-size:13.7px;line-height:13.7px;color:#333;white-space:nowrap;transform-origin:0 0;transform:scaleX(0.92);">14.08.2019 09:35</div>
 <div class="a" style="left:1182.5px;top:455.80px;font-size:13.7px;line-height:13.7px;color:#333;white-space:nowrap;transform-origin:0 0;transform:scaleX(0.95);">Омск (выезд из города)</div>
 <div class="a" style="left:256px;top:470px;width:1081px;height:1px;background:#b0cdc0"></div>
 <div class="a" style="left:474px;top:471px;width:1px;height:16px;background:#b0cdc0"></div>
 <div class="a" style="left:596px;top:471px;width:1px;height:16px;background:#b0cdc0"></div>
 <div class="a" style="left:736px;top:471px;width:1px;height:16px;background:#b0cdc0"></div>
 <div class="a" style="left:894px;top:471px;width:1px;height:16px;background:#b0cdc0"></div>
 <div class="a" style="left:1022px;top:471px;width:1px;height:16px;background:#b0cdc0"></div>
 <div class="a" style="left:1179px;top:471px;width:1px;height:16px;background:#b0cdc0"></div>
 <div class="a" style="left:599.5px;top:472.80px;font-size:13.7px;line-height:13.7px;color:#333;white-space:nowrap;transform-origin:0 0;transform:scaleX(0.906);">01000000072013</div>
 <div class="a" style="left:739.5px;top:472.80px;font-size:13.7px;line-height:13.7px;color:#333;white-space:nowrap;transform-origin:0 0;transform:scaleX(0.92);">14.08.2019 12:00</div>
 <div class="a" style="left:897.5px;top:472.80px;font-size:13.7px;line-height:13.7px;color:#333;white-space:nowrap;transform-origin:0 0;transform:scaleX(0.95);">Омск АВ</div>
 <div class="a" style="left:1025.5px;top:472.80px;font-size:13.7px;line-height:13.7px;color:#333;white-space:nowrap;transform-origin:0 0;transform:scaleX(0.92);">14.08.2019 16:20</div>
 <div class="a" style="left:1182.5px;top:472.80px;font-size:13.7px;line-height:13.7px;color:#333;white-space:nowrap;transform-origin:0 0;transform:scaleX(0.95);">Большеречье АВ</div>
 <div class="a" style="left:256px;top:487px;width:1081px;height:1px;background:#b0cdc0"></div>
 <div class="a" style="left:474px;top:488px;width:1px;height:16px;background:#b0cdc0"></div>
 <div class="a" style="left:596px;top:488px;width:1px;height:16px;background:#b0cdc0"></div>
 <div class="a" style="left:736px;top:488px;width:1px;height:16px;background:#b0cdc0"></div>
 <div class="a" style="left:894px;top:488px;width:1px;height:16px;background:#b0cdc0"></div>
 <div class="a" style="left:1022px;top:488px;width:1px;height:16px;background:#b0cdc0"></div>
 <div class="a" style="left:1179px;top:488px;width:1px;height:16px;background:#b0cdc0"></div>
 <div class="a" style="left:599.5px;top:489.80px;font-size:13.7px;line-height:13.7px;color:#333;white-space:nowrap;transform-origin:0 0;transform:scaleX(0.906);">01000000073010</div>
 <div class="a" style="left:739.5px;top:489.80px;font-size:13.7px;line-height:13.7px;color:#333;white-space:nowrap;transform-origin:0 0;transform:scaleX(0.92);">14.08.2019 15:30</div>
 <div class="a" style="left:897.5px;top:489.80px;font-size:13.7px;line-height:13.7px;color:#333;white-space:nowrap;transform-origin:0 0;transform:scaleX(0.95);">Омск АВ</div>
 <div class="a" style="left:1025.5px;top:489.80px;font-size:13.7px;line-height:13.7px;color:#333;white-space:nowrap;transform-origin:0 0;transform:scaleX(0.92);">14.08.2019 19:50</div>
 <div class="a" style="left:1182.5px;top:489.80px;font-size:13.7px;line-height:13.7px;color:#333;white-space:nowrap;transform-origin:0 0;transform:scaleX(0.95);">Большеречье АВ</div>
 <div class="a" style="left:256px;top:504px;width:1081px;height:1px;background:#b0cdc0"></div>
 <div class="a" style="left:474px;top:505px;width:1px;height:16px;background:#b0cdc0"></div>
 <div class="a" style="left:596px;top:505px;width:1px;height:16px;background:#b0cdc0"></div>
 <div class="a" style="left:736px;top:505px;width:1px;height:16px;background:#b0cdc0"></div>
 <div class="a" style="left:894px;top:505px;width:1px;height:16px;background:#b0cdc0"></div>
 <div class="a" style="left:1022px;top:505px;width:1px;height:16px;background:#b0cdc0"></div>
 <div class="a" style="left:1179px;top:505px;width:1px;height:16px;background:#b0cdc0"></div>
 <div class="a" style="left:599.5px;top:506.80px;font-size:13.7px;line-height:13.7px;color:#333;white-space:nowrap;transform-origin:0 0;transform:scaleX(0.906);">01000000073027</div>
 <div class="a" style="left:739.5px;top:506.80px;font-size:13.7px;line-height:13.7px;color:#333;white-space:nowrap;transform-origin:0 0;transform:scaleX(0.92);">14.08.2019 15:30</div>
 <div class="a" style="left:897.5px;top:506.80px;font-size:13.7px;line-height:13.7px;color:#333;white-space:nowrap;transform-origin:0 0;transform:scaleX(0.95);">Омск АВ</div>
 <div class="a" style="left:1025.5px;top:506.80px;font-size:13.7px;line-height:13.7px;color:#333;white-space:nowrap;transform-origin:0 0;transform:scaleX(0.92);">14.08.2019 19:50</div>
 <div class="a" style="left:1182.5px;top:506.80px;font-size:13.7px;line-height:13.7px;color:#333;white-space:nowrap;transform-origin:0 0;transform:scaleX(0.95);">Большеречье АВ</div>
 <div class="a" style="left:256px;top:521px;width:1081px;height:1px;background:#b0cdc0"></div>
 <div class="a" style="left:474px;top:522px;width:1px;height:16px;background:#b0cdc0"></div>
 <div class="a" style="left:596px;top:522px;width:1px;height:16px;background:#b0cdc0"></div>
 <div class="a" style="left:736px;top:522px;width:1px;height:16px;background:#b0cdc0"></div>
 <div class="a" style="left:894px;top:522px;width:1px;height:16px;background:#b0cdc0"></div>
 <div class="a" style="left:1022px;top:522px;width:1px;height:16px;background:#b0cdc0"></div>
 <div class="a" style="left:1179px;top:522px;width:1px;height:16px;background:#b0cdc0"></div>
 <div class="a" style="left:599.5px;top:523.80px;font-size:13.7px;line-height:13.7px;color:#333;white-space:nowrap;transform-origin:0 0;transform:scaleX(0.906);">01000000073034</div>
 <div class="a" style="left:739.5px;top:523.80px;font-size:13.7px;line-height:13.7px;color:#333;white-space:nowrap;transform-origin:0 0;transform:scaleX(0.92);">14.08.2019 15:30</div>
 <div class="a" style="left:897.5px;top:523.80px;font-size:13.7px;line-height:13.7px;color:#333;white-space:nowrap;transform-origin:0 0;transform:scaleX(0.95);">Омск АВ</div>
 <div class="a" style="left:1025.5px;top:523.80px;font-size:13.7px;line-height:13.7px;color:#333;white-space:nowrap;transform-origin:0 0;transform:scaleX(0.92);">14.08.2019 19:50</div>
 <div class="a" style="left:1182.5px;top:523.80px;font-size:13.7px;line-height:13.7px;color:#333;white-space:nowrap;transform-origin:0 0;transform:scaleX(0.95);">Большеречье АВ</div>
 <div class="a" style="left:256px;top:538px;width:1081px;height:1px;background:#b0cdc0"></div>
 <div class="a" style="left:474px;top:539px;width:1px;height:16px;background:#b0cdc0"></div>
 <div class="a" style="left:596px;top:539px;width:1px;height:16px;background:#b0cdc0"></div>
 <div class="a" style="left:736px;top:539px;width:1px;height:16px;background:#b0cdc0"></div>
 <div class="a" style="left:894px;top:539px;width:1px;height:16px;background:#b0cdc0"></div>
 <div class="a" style="left:1022px;top:539px;width:1px;height:16px;background:#b0cdc0"></div>
 <div class="a" style="left:1179px;top:539px;width:1px;height:16px;background:#b0cdc0"></div>
 <div class="a" style="left:599.5px;top:540.80px;font-size:13.7px;line-height:13.7px;color:#333;white-space:nowrap;transform-origin:0 0;transform:scaleX(0.906);">01000000073041</div>
 <div class="a" style="left:739.5px;top:540.80px;font-size:13.7px;line-height:13.7px;color:#333;white-space:nowrap;transform-origin:0 0;transform:scaleX(0.92);">14.08.2019 15:30</div>
 <div class="a" style="left:897.5px;top:540.80px;font-size:13.7px;line-height:13.7px;color:#333;white-space:nowrap;transform-origin:0 0;transform:scaleX(0.95);">Омск АВ</div>
 <div class="a" style="left:1025.5px;top:540.80px;font-size:13.7px;line-height:13.7px;color:#333;white-space:nowrap;transform-origin:0 0;transform:scaleX(0.92);">14.08.2019 19:50</div>
 <div class="a" style="left:1182.5px;top:540.80px;font-size:13.7px;line-height:13.7px;color:#333;white-space:nowrap;transform-origin:0 0;transform:scaleX(0.95);">Большеречье АВ</div>
 <div class="a" style="left:256px;top:555px;width:1081px;height:1px;background:#b0cdc0"></div>
 <div class="a" style="left:474px;top:556px;width:1px;height:16px;background:#b0cdc0"></div>
 <div class="a" style="left:596px;top:556px;width:1px;height:16px;background:#b0cdc0"></div>
 <div class="a" style="left:736px;top:556px;width:1px;height:16px;background:#b0cdc0"></div>
 <div class="a" style="left:894px;top:556px;width:1px;height:16px;background:#b0cdc0"></div>
 <div class="a" style="left:1022px;top:556px;width:1px;height:16px;background:#b0cdc0"></div>
 <div class="a" style="left:1179px;top:556px;width:1px;height:16px;background:#b0cdc0"></div>
 <div class="a" style="left:599.5px;top:557.80px;font-size:13.7px;line-height:13.7px;color:#333;white-space:nowrap;transform-origin:0 0;transform:scaleX(0.906);">01000000077018</div>
 <div class="a" style="left:739.5px;top:557.80px;font-size:13.7px;line-height:13.7px;color:#333;white-space:nowrap;transform-origin:0 0;transform:scaleX(0.92);">14.08.2019 15:30</div>
 <div class="a" style="left:897.5px;top:557.80px;font-size:13.7px;line-height:13.7px;color:#333;white-space:nowrap;transform-origin:0 0;transform:scaleX(0.95);">Омск АВ</div>
 <div class="a" style="left:1025.5px;top:557.80px;font-size:13.7px;line-height:13.7px;color:#333;white-space:nowrap;transform-origin:0 0;transform:scaleX(0.92);">14.08.2019 19:50</div>
 <div class="a" style="left:1182.5px;top:557.80px;font-size:13.7px;line-height:13.7px;color:#333;white-space:nowrap;transform-origin:0 0;transform:scaleX(0.95);">Большеречье АВ</div>
 <div class="a" style="left:256px;top:572px;width:1081px;height:1px;background:#b0cdc0"></div>
 <div class="a" style="left:256px;top:572px;width:1081px;height:1px;background:#b0cdc0"></div>
 <div class="a" style="left:256px;top:573px;width:1081px;height:22px;background:#e3edda"></div>
 <div class="a" style="left:260px;top:575.63px;font-size:16.5px;line-height:16.5px;font-weight:bold;color:#073b2c;white-space:nowrap;">Петр Анна Петрович</div>
 <div class="a" style="left:226px;top:578px;width:13px;height:13px;border:1px solid #a6a6a6;border-radius:2px;background:#fff"></div>
 <div class="a" style="left:228px;top:584px;width:9px;height:1px;background:#2a2a2a"></div>
 <div class="a" style="left:232px;top:591px;width:1px;height:21px;background:#a3a3a3"></div>
 <div class="a" style="left:232px;top:612px;width:23px;height:1px;background:#a3a3a3"></div>
 <div class="a" style="left:256px;top:595px;width:1081px;height:1px;background:#b0cdc0"></div>
 <div class="a" style="left:474px;top:596px;width:1px;height:16px;background:#b0cdc0"></div>
 <div class="a" style="left:596px;top:596px;width:1px;height:16px;background:#b0cdc0"></div>
 <div class="a" style="left:736px;top:596px;width:1px;height:16px;background:#b0cdc0"></div>
 <div class="a" style="left:894px;top:596px;width:1px;height:16px;background:#b0cdc0"></div>
 <div class="a" style="left:1022px;top:596px;width:1px;height:16px;background:#b0cdc0"></div>
 <div class="a" style="left:1179px;top:596px;width:1px;height:16px;background:#b0cdc0"></div>
 <div class="a" style="left:272.5px;top:597.80px;font-size:13.7px;line-height:13.7px;color:#333;white-space:nowrap;transform-origin:0 0;transform:scaleX(0.95);">Паспорт гражданина РФ</div>
 <div class="a" style="left:477.5px;top:597.80px;font-size:13.7px;line-height:13.7px;color:#333;white-space:nowrap;transform-origin:0 0;transform:scaleX(0.92);">45 09 010101</div>
 <div class="a" style="left:599.5px;top:597.80px;font-size:13.7px;line-height:13.7px;color:#333;white-space:nowrap;transform-origin:0 0;transform:scaleX(0.906);">01000000078015</div>
 <div class="a" style="left:739.5px;top:597.80px;font-size:13.7px;line-height:13.7px;color:#333;white-space:nowrap;transform-origin:0 0;transform:scaleX(0.92);">17.08.2019 09:20</div>
 <div class="a" style="left:897.5px;top:597.80px;font-size:13.7px;line-height:13.7px;color:#333;white-space:nowrap;transform-origin:0 0;transform:scaleX(0.95);">Омск АВ</div>
 <div class="a" style="left:1025.5px;top:597.80px;font-size:13.7px;line-height:13.7px;color:#333;white-space:nowrap;transform-origin:0 0;transform:scaleX(0.92);">17.08.2019 23:50</div>
 <div class="a" style="left:1182.5px;top:597.80px;font-size:13.7px;line-height:13.7px;color:#333;white-space:nowrap;transform-origin:0 0;transform:scaleX(0.95);">Астана АВ</div>
 <div class="a" style="left:256px;top:612px;width:1081px;height:1px;background:#b0cdc0"></div>
 <div class="a" style="left:256px;top:613px;width:1081px;height:22px;background:#e3edda"></div>
 <div class="a" style="left:260px;top:615.63px;font-size:16.5px;line-height:16.5px;font-weight:bold;color:#073b2c;white-space:nowrap;">Рябчиков Виталий Иванович</div>
 <div class="a" style="left:226px;top:618px;width:13px;height:13px;border:1px solid #a6a6a6;border-radius:2px;background:#fff"></div>
 <div class="a" style="left:228px;top:624px;width:9px;height:1px;background:#2a2a2a"></div>
 <div class="a" style="left:232px;top:631px;width:1px;height:21px;background:#a3a3a3"></div>
 <div class="a" style="left:232px;top:652px;width:23px;height:1px;background:#a3a3a3"></div>
 <div class="a" style="left:256px;top:635px;width:1081px;height:1px;background:#b0cdc0"></div>
 <div class="a" style="left:474px;top:636px;width:1px;height:16px;background:#b0cdc0"></div>
 <div class="a" style="left:596px;top:636px;width:1px;height:16px;background:#b0cdc0"></div>
 <div class="a" style="left:736px;top:636px;width:1px;height:16px;background:#b0cdc0"></div>
 <div class="a" style="left:894px;top:636px;width:1px;height:16px;background:#b0cdc0"></div>
 <div class="a" style="left:1022px;top:636px;width:1px;height:16px;background:#b0cdc0"></div>
 <div class="a" style="left:1179px;top:636px;width:1px;height:16px;background:#b0cdc0"></div>
 <div class="a" style="left:272.5px;top:637.80px;font-size:13.7px;line-height:13.7px;color:#333;white-space:nowrap;transform-origin:0 0;transform:scaleX(0.95);">Паспорт гражданина РФ</div>
 <div class="a" style="left:477.5px;top:637.80px;font-size:13.7px;line-height:13.7px;color:#333;white-space:nowrap;transform-origin:0 0;transform:scaleX(0.92);">11 11 111111</div>
 <div class="a" style="left:599.5px;top:637.80px;font-size:13.7px;line-height:13.7px;color:#333;white-space:nowrap;transform-origin:0 0;transform:scaleX(0.906);">01000000070019</div>
 <div class="a" style="left:739.5px;top:637.80px;font-size:13.7px;line-height:13.7px;color:#333;white-space:nowrap;transform-origin:0 0;transform:scaleX(0.92);">14.08.2019 09:20</div>
 <div class="a" style="left:897.5px;top:637.80px;font-size:13.7px;line-height:13.7px;color:#333;white-space:nowrap;transform-origin:0 0;transform:scaleX(0.95);">Омск АВ</div>
 <div class="a" style="left:1025.5px;top:637.80px;font-size:13.7px;line-height:13.7px;color:#333;white-space:nowrap;transform-origin:0 0;transform:scaleX(0.92);">14.08.2019 14:20</div>
 <div class="a" style="left:1182.5px;top:637.80px;font-size:13.7px;line-height:13.7px;color:#333;white-space:nowrap;transform-origin:0 0;transform:scaleX(0.95);">Петропавловск АС</div>
 <div class="a" style="left:256px;top:652px;width:1081px;height:1px;background:#b0cdc0"></div>
 <div class="a" style="left:256px;top:653px;width:1081px;height:22px;background:#d8e4cc"></div>
 <div class="a" style="left:260px;top:655.63px;font-size:16.5px;line-height:16.5px;font-weight:bold;color:#073b2c;white-space:nowrap;">Итого</div>
 <div class="a" style="left:256px;top:675px;width:1081px;height:1px;background:#a3a3a3"></div>
 <div class="a" style="left:1340px;top:223px;width:8px;height:572px;border-radius:4px;background:#d6d6d6"></div>
 <div class="a" style="left:1340px;top:223px;width:8px;height:321px;border-radius:4px;background:#9b9b9b"></div>
 <svg style="left:1341px;top:209px" width="6" height="4" viewBox="0 0 6 4" fill="#c4c4c4"><path d="M3 0L6 4H0z"/></svg>
 <svg style="left:1341px;top:805px" width="6" height="4" viewBox="0 0 6 4" fill="#555"><path d="M0 0h6L3 4z"/></svg>
 <div class="a" style="left:246px;top:821px;width:1068px;height:8px;border-radius:4px;background:#d6d6d6"></div>
 <div class="a" style="left:246px;top:821px;width:702px;height:8px;border-radius:4px;background:#9b9b9b"></div>
 <svg style="left:232px;top:822px" width="4" height="6" viewBox="0 0 4 6" fill="#c4c4c4"><path d="M0 3L4 0v6z"/></svg>
 <svg style="left:1324px;top:822px" width="4" height="6" viewBox="0 0 4 6" fill="#555"><path d="M4 3L0 0v6z"/></svg>
 <div class="a" style="left:1px;top:845px;width:1374px;height:4px;background:linear-gradient(#a4a6ab,#bcbdc0 50%,#d3d3d4)"></div>
 <div class="a" style="left:0;top:849px;width:1376px;height:1px;background:#7b7b7d"></div>
</div>
</body></html>
